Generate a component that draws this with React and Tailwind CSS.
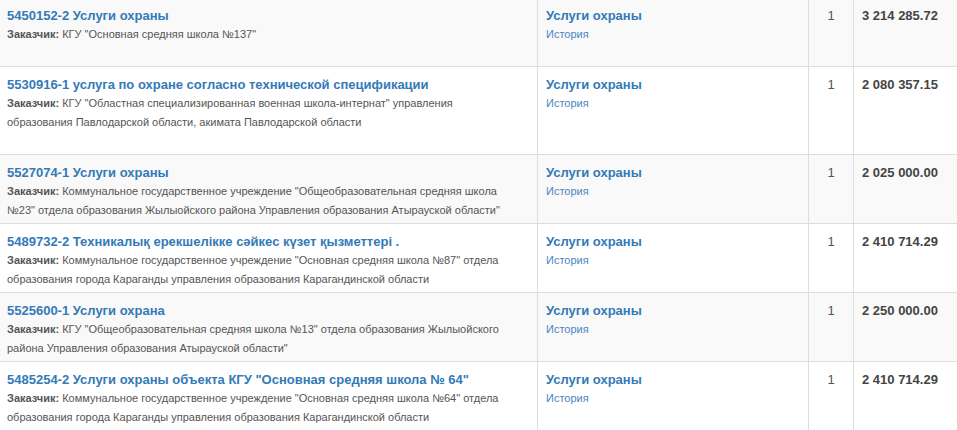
import React from "react";

const rows = [
  {
    id: "5450152-2",
    title: "Услуги охраны",
    customer: ['КГУ "Основная средняя школа №137"'],
    service: "Услуги охраны",
    qty: 1,
    sum: "3 214 285.72",
    h: "h-[69px]",
  },
  {
    id: "5530916-1",
    title: "услуга по охране согласно технической спецификации",
    customer: [
      'КГУ "Областная специализированная военная школа-интернат" управления',
      "образования Павлодарской области, акимата Павлодарской области",
    ],
    service: "Услуги охраны",
    qty: 1,
    sum: "2 080 357.15",
    h: "h-[88px]",
  },
  {
    id: "5527074-1",
    title: "Услуги охраны",
    customer: [
      'Коммунальное государственное учреждение "Общеобразовательная средняя школа',
      '№23" отдела образования Жылыойского района Управления образования Атырауской области"',
    ],
    service: "Услуги охраны",
    qty: 1,
    sum: "2 025 000.00",
    h: "h-[69px]",
  },
  {
    id: "5489732-2",
    title: "Техникалық ерекшелікке сәйкес күзет қызметтері .",
    customer: [
      'Коммунальное государственное учреждение "Основная средняя школа №87" отдела',
      "образования города Караганды управления образования Карагандинской области",
    ],
    service: "Услуги охраны",
    qty: 1,
    sum: "2 410 714.29",
    h: "h-[69px]",
  },
  {
    id: "5525600-1",
    title: "Услуги охрана",
    customer: [
      'КГУ "Общеобразовательная средняя школа №13" отдела образования Жылыойского',
      'района Управления образования Атырауской области"',
    ],
    service: "Услуги охраны",
    qty: 1,
    sum: "2 250 000.00",
    h: "h-[69px]",
  },
  {
    id: "5485254-2",
    title: 'Услуги охраны объекта КГУ "Основная средняя школа № 64"',
    customer: [
      'Коммунальное государственное учреждение "Основная средняя школа №64" отдела',
      "образования города Караганды управления образования Карагандинской области",
    ],
    service: "Услуги охраны",
    qty: 1,
    sum: "2 410 714.29",
    h: "h-[69px]",
  },
];

// ==== One lot row ====
const LotRow = ({ row, striped }) => (
  <div
    className={`flex border-t border-[#ddd] ${row.h} ${
      striped ? "bg-[#f9f9f9]" : "bg-white"
    }`}
  >
    <div className="w-[537px] shrink-0 pl-[7px] pr-2 pt-2">
      <a className="block text-[13px] font-bold leading-[19px] text-[#337ab7]">
        {row.id} {row.title}
      </a>
      <div className="text-[11px] leading-[19px] text-[#555]">
        {row.customer.map((line, i) => (
          <div key={i} className="whitespace-nowrap">
            {i === 0 && <b>Заказчик: </b>}
            {line}
          </div>
        ))}
      </div>
    </div>
    <div className="w-[271px] shrink-0 border-l border-[#ddd] px-2 pt-2">
      <a className="block text-[13px] font-bold leading-[19px] text-[#337ab7]">
        {row.service}
      </a>
      <a className="block text-[11px] leading-[19px] text-[#4a86c2]">
        История
      </a>
    </div>
    <div className="w-[45px] shrink-0 border-l border-[#ddd] pt-2 text-center text-[13px] leading-[19px] text-[#555]">
      {row.qty}
    </div>
    <div className="flex-1 border-l border-[#ddd] px-2 pt-2 text-[13px] font-bold leading-[19px] text-[#444] whitespace-nowrap">
      {row.sum}
    </div>
  </div>
);

export default function App() {
  return (
    <div
      className="h-[430px] w-[957px] overflow-hidden bg-white"
      style={{ fontFamily: '"Liberation Sans", Arial, sans-serif' }}
    >
      <div className="-mt-[3px]">
        {rows.map((r, i) => (
          <LotRow key={r.id} row={r} striped={i % 2 === 0} />
        ))}
      </div>
    </div>
  );
}
